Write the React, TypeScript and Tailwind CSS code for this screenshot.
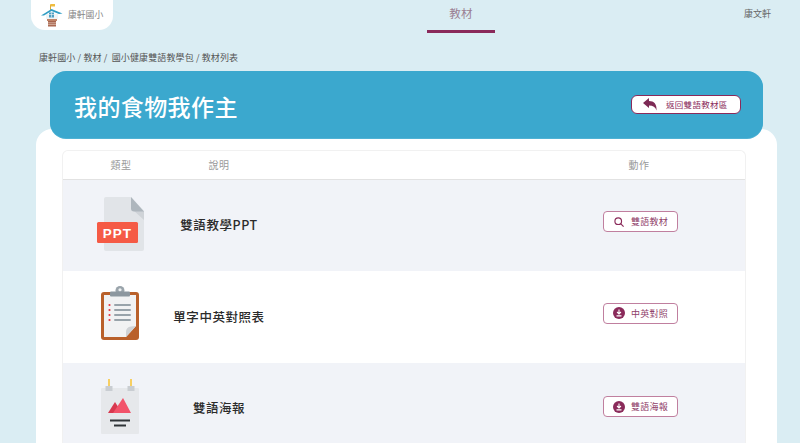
const cjk = "font-['Noto_Sans_CJK_TC','Noto_Sans',sans-serif]";

function Logo() {
  return (
    <svg width="22" height="23" viewBox="0 0 22 23">
      <path d="M9.500 0.500v6" stroke="#d9a93a" strokeWidth="1" />
      <path d="M9.500 0h4.500v2.500H9.500z" fill="#f0bd3f" />
      <path d="M5 10h12v5H5z" fill="#eef4f6" />
      <path d="M0 11.500 L10.500 5 L21.500 9.500 L18 10 L10.500 7 L3 11.500Z" fill="#2f9dc4" />
      <path d="M8 8.500h5v5H8z" fill="#4f9fc2" />
      <path d="M8 10.500h5M10.500 8.500v5" stroke="#eef6f9" strokeWidth=".6" />
      <path d="M6 15h10v2H6z" fill="#c08468" />
      <path d="M7 17h8v5.500H7z" fill="#a8644d" />
      <path d="M7 18.800h8M7 20.600h8" stroke="#e5cdbf" strokeWidth=".7" />
    </svg>
  );
}

function PptIcon() {
  return (
    <svg width="50" height="56" viewBox="0 0 50 56">
      <path d="M9 3a2 2 0 0 1 2-2h25l13 14v38a2 2 0 0 1-2 2H11a2 2 0 0 1-2-2z" fill="#e1e4e8" />
      <path d="M36 14 L49 15 V24 L38 14z" fill="#cfd3d8" />
      <path d="M36 1 L49 15.500 H39 Q36 15.500 36 12.500z" fill="#aeb6bd" />
      <rect x="2" y="26" width="41" height="21" rx="1.500" fill="#f55a45" />
      <text x="22.500" y="41.500" textAnchor="middle" fill="#fff" fontSize="13.500" fontWeight="700" letterSpacing="1" fontFamily="'Liberation Sans',sans-serif">PPT</text>
    </svg>
  );
}

function ClipboardIcon() {
  return (
    <svg width="40" height="56" viewBox="0 0 40 56">
      <rect x="1" y="6" width="38" height="48" rx="3" fill="#b9602a" />
      <path d="M4 9h32v31l-10 11H4z" fill="#f1f2f3" />
      <path d="M36 40 L26 51 V46 Q26 41 31 40.500z" fill="#cfd2d5" />
      <circle cx="20" cy="4.500" r="4.500" fill="#9aa4ab" />
      <circle cx="20" cy="3.800" r="1.600" fill="#eef1f2" />
      <rect x="10" y="5.500" width="20" height="5" rx="1" fill="#8c979f" />
      <g fill="#e8333f">
        <circle cx="9.500" cy="19" r="1.100" /><circle cx="9.500" cy="24" r="1.100" /><circle cx="9.500" cy="29" r="1.100" /><circle cx="9.500" cy="34" r="1.100" />
      </g>
      <g fill="#98a3aa">
        <rect x="14" y="18" width="17" height="2" rx="1" /><rect x="14" y="23" width="17" height="2" rx="1" /><rect x="14" y="28" width="17" height="2" rx="1" /><rect x="14" y="33" width="17" height="2" rx="1" />
      </g>
    </svg>
  );
}

function PosterIcon() {
  return (
    <svg width="40" height="56" viewBox="0 0 40 56">
      <rect x="1" y="9" width="38" height="46" rx="1" fill="#e6e8eb" />
      <rect x="8" y="0" width="2" height="8" fill="#f7cf63" />
      <rect x="30" y="0" width="2" height="8" fill="#f7cf63" />
      <rect x="5.500" y="7" width="7" height="5" fill="#c9cdd2" />
      <rect x="27.500" y="7" width="7" height="5" fill="#c9cdd2" />
      <path d="M8 34 L15 23 L22 34z" fill="#d8384f" />
      <path d="M13 34 L23 19 L31 34z" fill="#f2536a" />
      <rect x="10" y="40.500" width="20" height="2" fill="#2f3438" />
      <rect x="14" y="45.500" width="12" height="2" fill="#2f3438" />
    </svg>
  );
}

function DownloadIcon() {
  return (
    <svg width="12" height="12" viewBox="0 0 13 13">
      <circle cx="6.500" cy="6.500" r="6.500" fill="#8a2a5a" />
      <path d="M6.500 2.800v4.400M4.400 5.400l2.100 2.100 2.100-2.100M3.800 9.600h5.400" stroke="#fff" strokeWidth="1.200" fill="none" />
    </svg>
  );
}

function SearchIcon() {
  return (
    <svg width="10" height="10" viewBox="0 0 13 13" fill="none" stroke="#8a2a5a" strokeWidth="1.500">
      <circle cx="5.500" cy="5.500" r="4.300" />
      <path d="M8.600 8.600 12.500 12.500" />
    </svg>
  );
}

function ActionButton({ icon, label }: { icon: React.ReactNode; label: string }) {
  return (
    <div className="flex h-[21px] w-[75px] items-center justify-center gap-[5px] rounded-[4px] border border-[#c07f9f] bg-white pl-[1px]">
      <span className="flex w-[13px] justify-center">{icon}</span>
      <span className="text-[9px] leading-none tracking-[0.3px] text-[#8f4069]">{label}</span>
    </div>
  );
}

function Row({ icon, label, action, actionIcon, gray, height, actionLift }: { icon: React.ReactNode; label: string; action: string; actionIcon: React.ReactNode; gray: boolean; height: string; actionLift: string }) {
  return (
    <div className={`flex items-center ${height} ${gray ? "bg-[#f1f3f8]" : "bg-white"}`}>
      <div className="flex w-[108px] justify-center pl-[8px]">{icon}</div>
      <div className="flex w-[96px] justify-center whitespace-nowrap text-[12.500px] font-medium tracking-[0.55px] text-[#2b2b2b]">{label}</div>
      <div className={`ml-auto flex w-[212px] justify-center pl-[2px] ${actionLift}`}>
        <ActionButton icon={actionIcon} label={action} />
      </div>
    </div>
  );
}

export default function App() {
  return (
    <div className={`h-[443px] w-[800px] overflow-hidden bg-[#daedf3] ${cjk}`}>
      <header className="flex h-[33px] items-start">
        <div className="ml-[31px] flex h-[30px] w-[82px] items-center gap-[5px] rounded-b-[14px] bg-white pl-[10px]">
          <Logo />
          <span className="text-[8.800px] leading-none text-[#858585]">康軒國小</span>
        </div>
        <div className="ml-[314px] flex h-[33px] w-[68px] items-center justify-center border-b-[3px] border-[#8a2a5a] pb-[3px] text-[11.500px] tracking-[0.3px] text-[#9a7f92]">教材</div>
        <div className="ml-auto mr-[29px] pt-[8px] text-[9px] leading-[12px] text-[#666]">康文軒</div>
      </header>

      <div className="ml-[39px] mt-[18px] h-[20px] text-[9px] leading-[13px] tracking-[0.12px] text-[#555]">康軒國小 / 教材 /&nbsp; 國小健康雙語教學包 / 教材列表</div>

      <div className="relative z-10 mx-[37px] ml-[50px] flex h-[67px] items-center justify-between rounded-[16px] bg-[#3ba8ce] pl-[24px] pr-[22px] shadow-[0_1px_0_#4fb2d4]">
        <h1 className="pt-[3px] text-[23px] font-medium leading-none tracking-[0.4px] text-white">我的食物我作主</h1>
        <div className="flex h-[19px] w-[110px] items-center gap-[9px] rounded-[6px] border border-[#8a2a5a] bg-white pl-[11px]">
          <svg width="14" height="13" viewBox="0 0 14 13" fill="#7d2a55">
            <path d="M0 5 L6 0 V3 C11 3 14 6 13.500 12.500 C12.500 9 10 7.500 6 7.500 V10z" />
          </svg>
          <span className="text-[8.500px] leading-none tracking-[0.3px] text-[#8a2a5a]">返回雙語教材區</span>
        </div>
      </div>

      <main className="-mt-[9px] ml-[36px] h-[320px] w-[741px] rounded-t-[16px] bg-white pl-[26px] pt-[21px]">
        <div className="w-[684px] rounded-t-[6px] border-x border-t border-[#f1f1f1]">
          <div className="flex h-[29px] items-center border-b border-[#e2e2e2] pb-[2px] text-[10px] tracking-[0.5px] text-[#9a9a9a]">
            <div className="flex w-[108px] justify-center pl-[8px]">類型</div>
            <div className="flex w-[96px] justify-center">說明</div>
            <div className="ml-auto flex w-[212px] justify-center">動作</div>
          </div>
          <Row gray height="h-[91px]" actionLift="pb-[8px]" icon={<span className="-mt-[3px] mr-[2px]"><PptIcon /></span>} label="雙語教學PPT" action="雙語教材" actionIcon={<SearchIcon />} />
          <Row gray={false} height="h-[92px]" actionLift="pb-[8px]" icon={<span className="-mt-[6px] mr-[2px]"><ClipboardIcon /></span>} label="單字中英對照表" action="中英對照" actionIcon={<DownloadIcon />} />
          <Row gray height="h-[91px]" actionLift="pb-[4px]" icon={<span className="-mt-[4px] mr-[2px]"><PosterIcon /></span>} label="雙語海報" action="雙語海報" actionIcon={<DownloadIcon />} />
        </div>
      </main>
    </div>
  );
}
